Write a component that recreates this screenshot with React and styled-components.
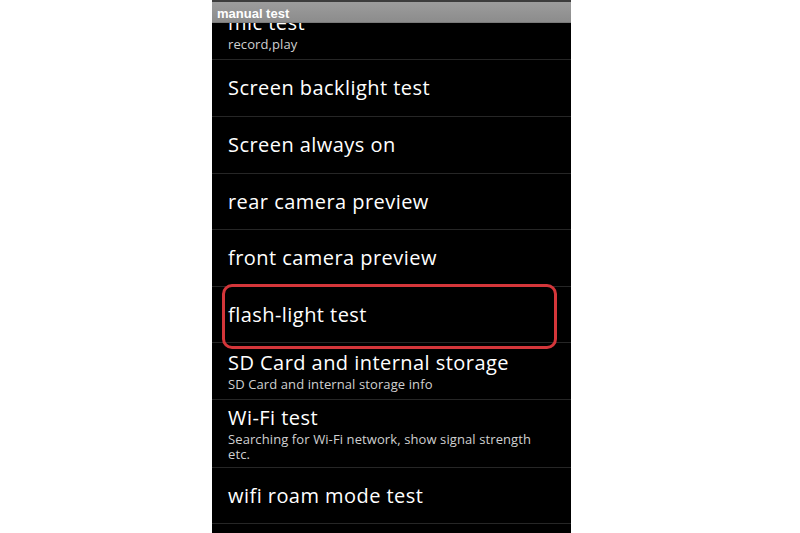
import React from "react";
import styled, { createGlobalStyle } from "styled-components";

const Global = createGlobalStyle`
  html, body { margin: 0; padding: 0; background: #fff; }
  body { font-family: "Open Sans", "Noto Sans", sans-serif; }
`;

const Page = styled.div`
  height: 533px;
  padding-left: 212px;
  display: flex;
  overflow: hidden;
`;

const Screen = styled.div`
  width: 359px;
  height: 533px;
  background: #000;
  display: flex;
  flex-direction: column;
  overflow: hidden;
`;

const TitleBar = styled.div`
  flex: none;
  box-sizing: border-box;
  height: 23px;
  border-top: 2px solid #3c3c3c;
  border-bottom: 1px solid #7a7a7a;
  background: linear-gradient(#9c9c9c, #8c8c8c);
  display: flex;
  align-items: center;
  padding: 2px 0 0 5px;
  color: #fff;
  font-family: "Liberation Sans", Arial, sans-serif;
  font-weight: bold;
  font-size: 13px;
  position: relative;
  z-index: 2;
`;

const List = styled.div`
  display: flex;
  flex-direction: column;
`;

const Row = styled.div`
  position: relative;
  flex: none;
  height: ${(p) => p.$h}px;
  box-sizing: border-box;
  border-bottom: 1px solid #262626;
  display: flex;
  flex-direction: column;
  justify-content: ${(p) => (p.$clipped ? "flex-end" : "center")};
  padding: ${(p) => (p.$clipped ? "0 30px 7px 16px" : "0 30px 0 16px")};
  overflow: ${(p) => (p.$clipped ? "hidden" : "visible")};
`;

const Title = styled.div`
  color: #fff;
  font-size: 20px;
  line-height: 24px;
  letter-spacing: 0.45px;
  white-space: nowrap;
`;

const Sub = styled.div`
  color: #d0d0d0;
  font-size: 13px;
  line-height: 15px;
  letter-spacing: 0.1px;
  margin-top: 2px;
`;

const Highlight = styled.div`
  position: absolute;
  z-index: 1;
  left: 10px;
  right: 14px;
  top: -3px;
  bottom: -7px;
  border: 3px solid #d4363a;
  border-radius: 10px;
  pointer-events: none;
`;

const items = [
  { t: "mic test", s: "record,play", h: 37, clipped: true },
  { t: "Screen backlight test", h: 57 },
  { t: "Screen always on", h: 57 },
  { t: "rear camera preview", h: 56 },
  { t: "front camera preview", h: 57 },
  { t: "flash-light test", h: 56, mark: true },
  { t: "SD Card and internal storage", s: "SD Card and internal storage info", h: 57 },
  { t: "Wi-Fi test", s: "Searching for Wi-Fi network, show signal strength etc.", h: 68 },
  { t: "wifi roam mode test", h: 56 },
  { t: "", h: 56 },
];

export default function App() {
  return (
    <>
      <Global />
      <Page>
        <Screen>
          <TitleBar>manual test</TitleBar>
          <List>
            {items.map((it, i) => (
              <Row key={i} $h={it.h} $clipped={it.clipped}>
                {it.mark && <Highlight />}
                <Title>{it.t}</Title>
                {it.s && <Sub>{it.s}</Sub>}
              </Row>
            ))}
          </List>
        </Screen>
      </Page>
    </>
  );
}
